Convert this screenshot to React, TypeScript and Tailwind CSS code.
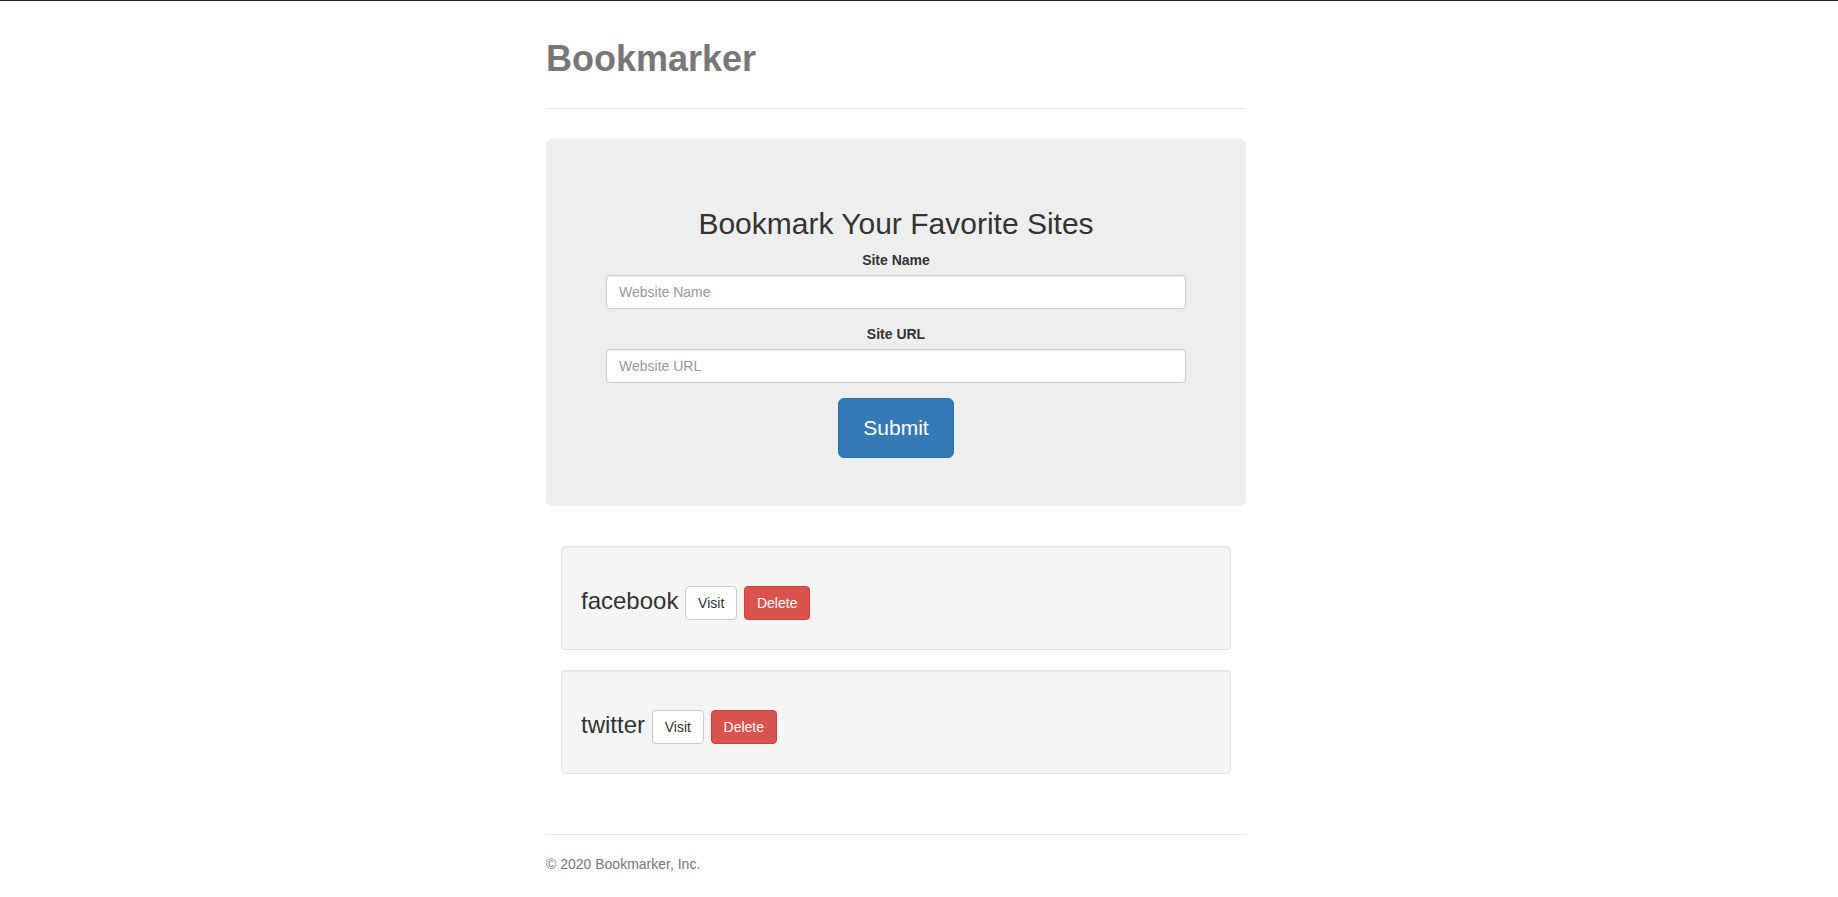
export default function App() {
  const wells = ["facebook", "twitter"];
  return (
    <div className="min-h-[897px] bg-white border-t border-[#222] pt-[19px] pb-[20px] text-[#333] text-[14px] leading-[20px] font-['Liberation_Sans',Arial,Helvetica,sans-serif]">
      <div className="ml-[531px] w-[730px] px-[15px] flex flex-col">
        <div className="pb-[20px] border-b border-[#e5e5e5] mb-[30px] pt-[20px]">
          <h1 className="mb-[10px] text-[36px] leading-[38px] font-bold text-[#777]">Bookmarker</h1>
        </div>

        <div className="bg-[#eee] rounded-[6px] px-[60px] py-[48px] text-center flex flex-col">
          <h2 className="mt-[20px] mb-[10px] text-[30px] leading-[1.1] font-normal text-[#333]">
            Bookmark Your Favorite Sites
          </h2>
          <form className="flex flex-col" onSubmit={(e) => e.preventDefault()}>
            <div className="mb-[15px] flex flex-col items-center">
              <label className="inline-block mb-[5px] font-bold">Site Name</label>
              <input
                type="text"
                placeholder="Website Name"
                className="block w-full h-[34px] px-[12px] py-[6px] text-[14px] leading-[20px] text-[#555] bg-white border border-[#ccc] rounded-[4px] shadow-[inset_0_1px_1px_rgba(0,0,0,0.075)] placeholder:text-[#999] outline-none"
              />
            </div>
            <div className="mb-[15px] flex flex-col items-center">
              <label className="inline-block mb-[5px] font-bold">Site URL</label>
              <input
                type="text"
                placeholder="Website URL"
                className="block w-full h-[34px] px-[12px] py-[6px] text-[14px] leading-[20px] text-[#555] bg-white border border-[#ccc] rounded-[4px] shadow-[inset_0_1px_1px_rgba(0,0,0,0.075)] placeholder:text-[#999] outline-none"
              />
            </div>
            <div className="flex justify-center">
              <button
                type="submit"
                className="px-[24px] py-[14px] text-[21px] leading-[30px] text-white bg-[#337ab7] border border-[#2e6da4] rounded-[6px]"
              >
                Submit
              </button>
            </div>
          </form>
        </div>

        <div className="mt-[40px] mb-[40px] px-[15px] flex flex-col">
          {wells.map((name) => (
            <div
              key={name}
              className="min-h-[20px] p-[19px] mb-[20px] bg-[#f5f5f5] border border-[#e3e3e3] rounded-[4px] shadow-[inset_0_1px_1px_rgba(0,0,0,0.05)]"
            >
              <h3 className="mt-[20px] mb-[10px] text-[24px] leading-[1.1] font-normal text-[#333]">
                {name}{" "}
                <a className="inline-block align-middle px-[12px] py-[6px] text-[14px] leading-[20px] text-[#333] bg-white border border-[#ccc] rounded-[4px] cursor-pointer">
                  Visit
                </a>{" "}
                <a className="inline-block align-middle px-[12px] py-[6px] text-[14px] leading-[20px] text-white bg-[#d9534f] border border-[#d43f3a] rounded-[4px] cursor-pointer">
                  Delete
                </a>
              </h3>
            </div>
          ))}
        </div>

        <footer className="border-t border-[#e5e5e5] pt-[19px] text-[#777]">
          <p className="mb-[10px]">© 2020 Bookmarker, Inc.</p>
        </footer>
      </div>
    </div>
  );
}
